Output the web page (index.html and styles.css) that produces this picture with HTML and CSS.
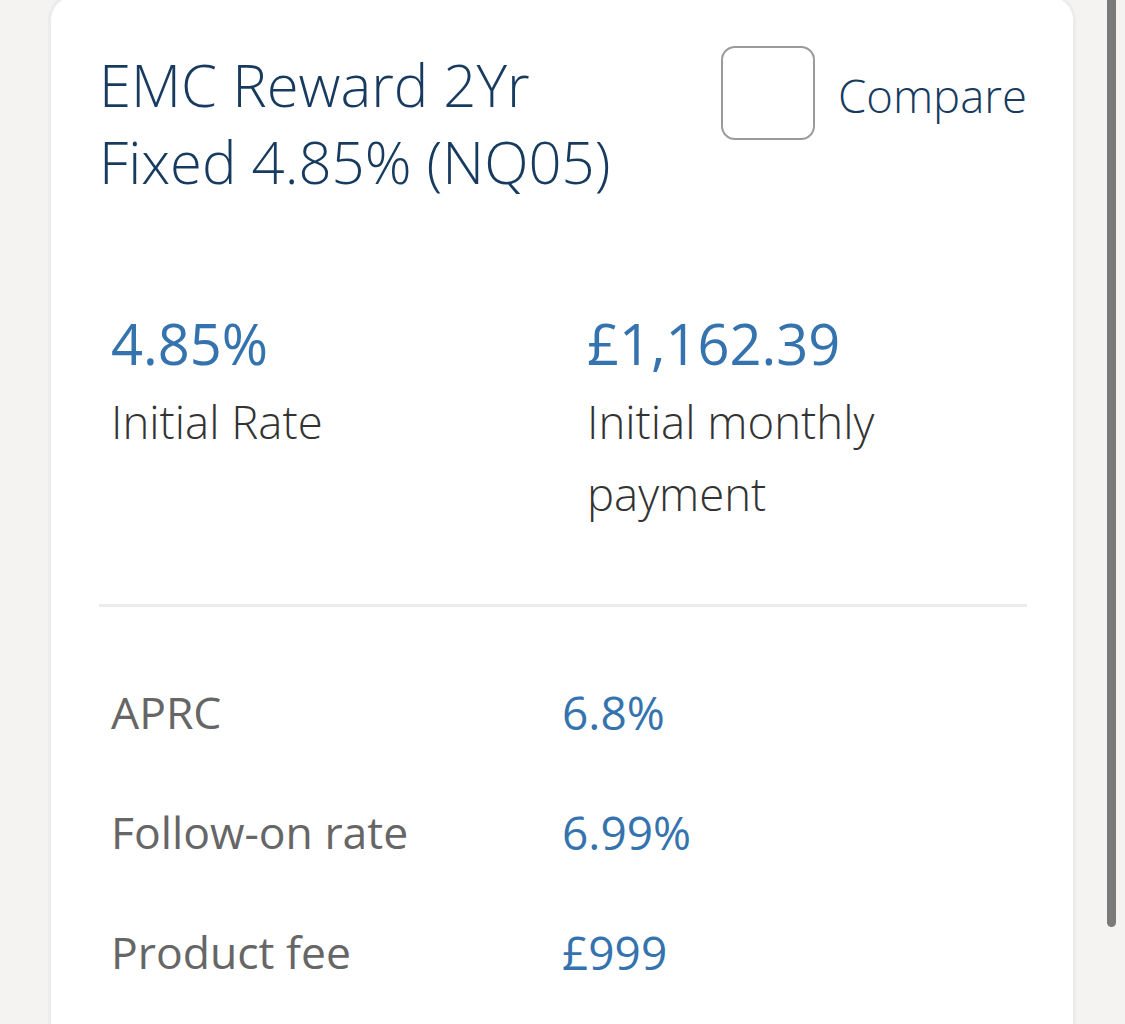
FILE: index.html
```html
<!DOCTYPE html>
<html lang="en">
<head>
<meta charset="utf-8">
<title>EMC Reward 2Yr Fixed</title>
<link rel="stylesheet" href="styles.css">
</head>
<body>
<div class="page">
  <div class="card">
    <div class="card-header">
      <h2 class="product-title">EMC Reward 2Yr Fixed 4.85% (NQ05)</h2>
      <label class="compare">
        <span class="checkbox"></span>
        <span class="compare-text">Compare</span>
      </label>
    </div>
    <div class="stats">
      <div class="stat">
        <div class="stat-value">4.85%</div>
        <div class="stat-label">Initial Rate</div>
      </div>
      <div class="stat">
        <div class="stat-value">£1,162.39</div>
        <div class="stat-label">Initial monthly payment</div>
      </div>
    </div>
    <hr class="divider">
    <div class="details">
      <div class="row"><span class="row-label">APRC</span><span class="row-value">6.8%</span></div>
      <div class="row"><span class="row-label">Follow-on rate</span><span class="row-value">6.99%</span></div>
      <div class="row"><span class="row-label">Product fee</span><span class="row-value">£999</span></div>
    </div>
  </div>
  <div class="scrollbar"></div>
</div>
</body>
</html>
```
FILE: styles.css
```css
html, body {
  margin: 0;
  padding: 0;
  height: 100%;
  overflow: hidden;
}
body {
  background: #f4f3f1;
  font-family: "Open Sans", "Noto Sans", sans-serif;
}
.page {
  padding-left: 48px;
  width: 1028px;
}
.card {
  background: #ffffff;
  border: 3px solid #ececec;
  border-bottom: none;
  border-radius: 26px 26px 0 0;
  margin-top: -6px;
  padding: 49px 46px 40px 48px;
  min-height: 1100px;
  box-sizing: border-box;
}
.card-header {
  display: flex;
  justify-content: space-between;
  align-items: flex-start;
}
.product-title {
  margin: 0;
  width: 560px;
  font-weight: 300;
  font-size: 58px;
  line-height: 77px;
  color: #173b5f;
}
.compare {
  display: flex;
  align-items: center;
  gap: 23px;
}
.checkbox {
  width: 90px;
  height: 90px;
  border: 2.5px solid #9a9a9a;
  border-radius: 14px;
}
.compare-text {
  font-size: 45.5px;
  font-weight: 300;
  color: #173b5f;
  padding-top: 4px;
}
.stats {
  display: grid;
  grid-template-columns: 476px 1fr;
  padding-left: 12px;
  margin-top: 111px;
}
.stat-value {
  font-size: 56px;
  line-height: 64px;
  color: #3473ad;
  margin-bottom: 10px;
}
.stat-label {
  font-size: 45.5px;
  line-height: 72px;
  font-weight: 300;
  color: #333333;
  width: 320px;
}
.divider {
  margin: 75px 0 0 0;
  border: none;
  height: 3px;
  background: #ececec;
}
.details {
  padding-left: 12px;
  margin-top: 45px;
}
.row {
  display: grid;
  grid-template-columns: 451px 1fr;
  height: 120px;
  line-height: 120px;
  font-size: 46px;
}
.row-label {
  color: #666666;
  font-size: 44.5px;
}
.row-value {
  color: #3473ad;
}
.scrollbar {
  position: fixed;
  left: 1107px;
  top: -10px;
  width: 9px;
  height: 937px;
  background: #7a7a7a;
  border-radius: 5px;
}
```
